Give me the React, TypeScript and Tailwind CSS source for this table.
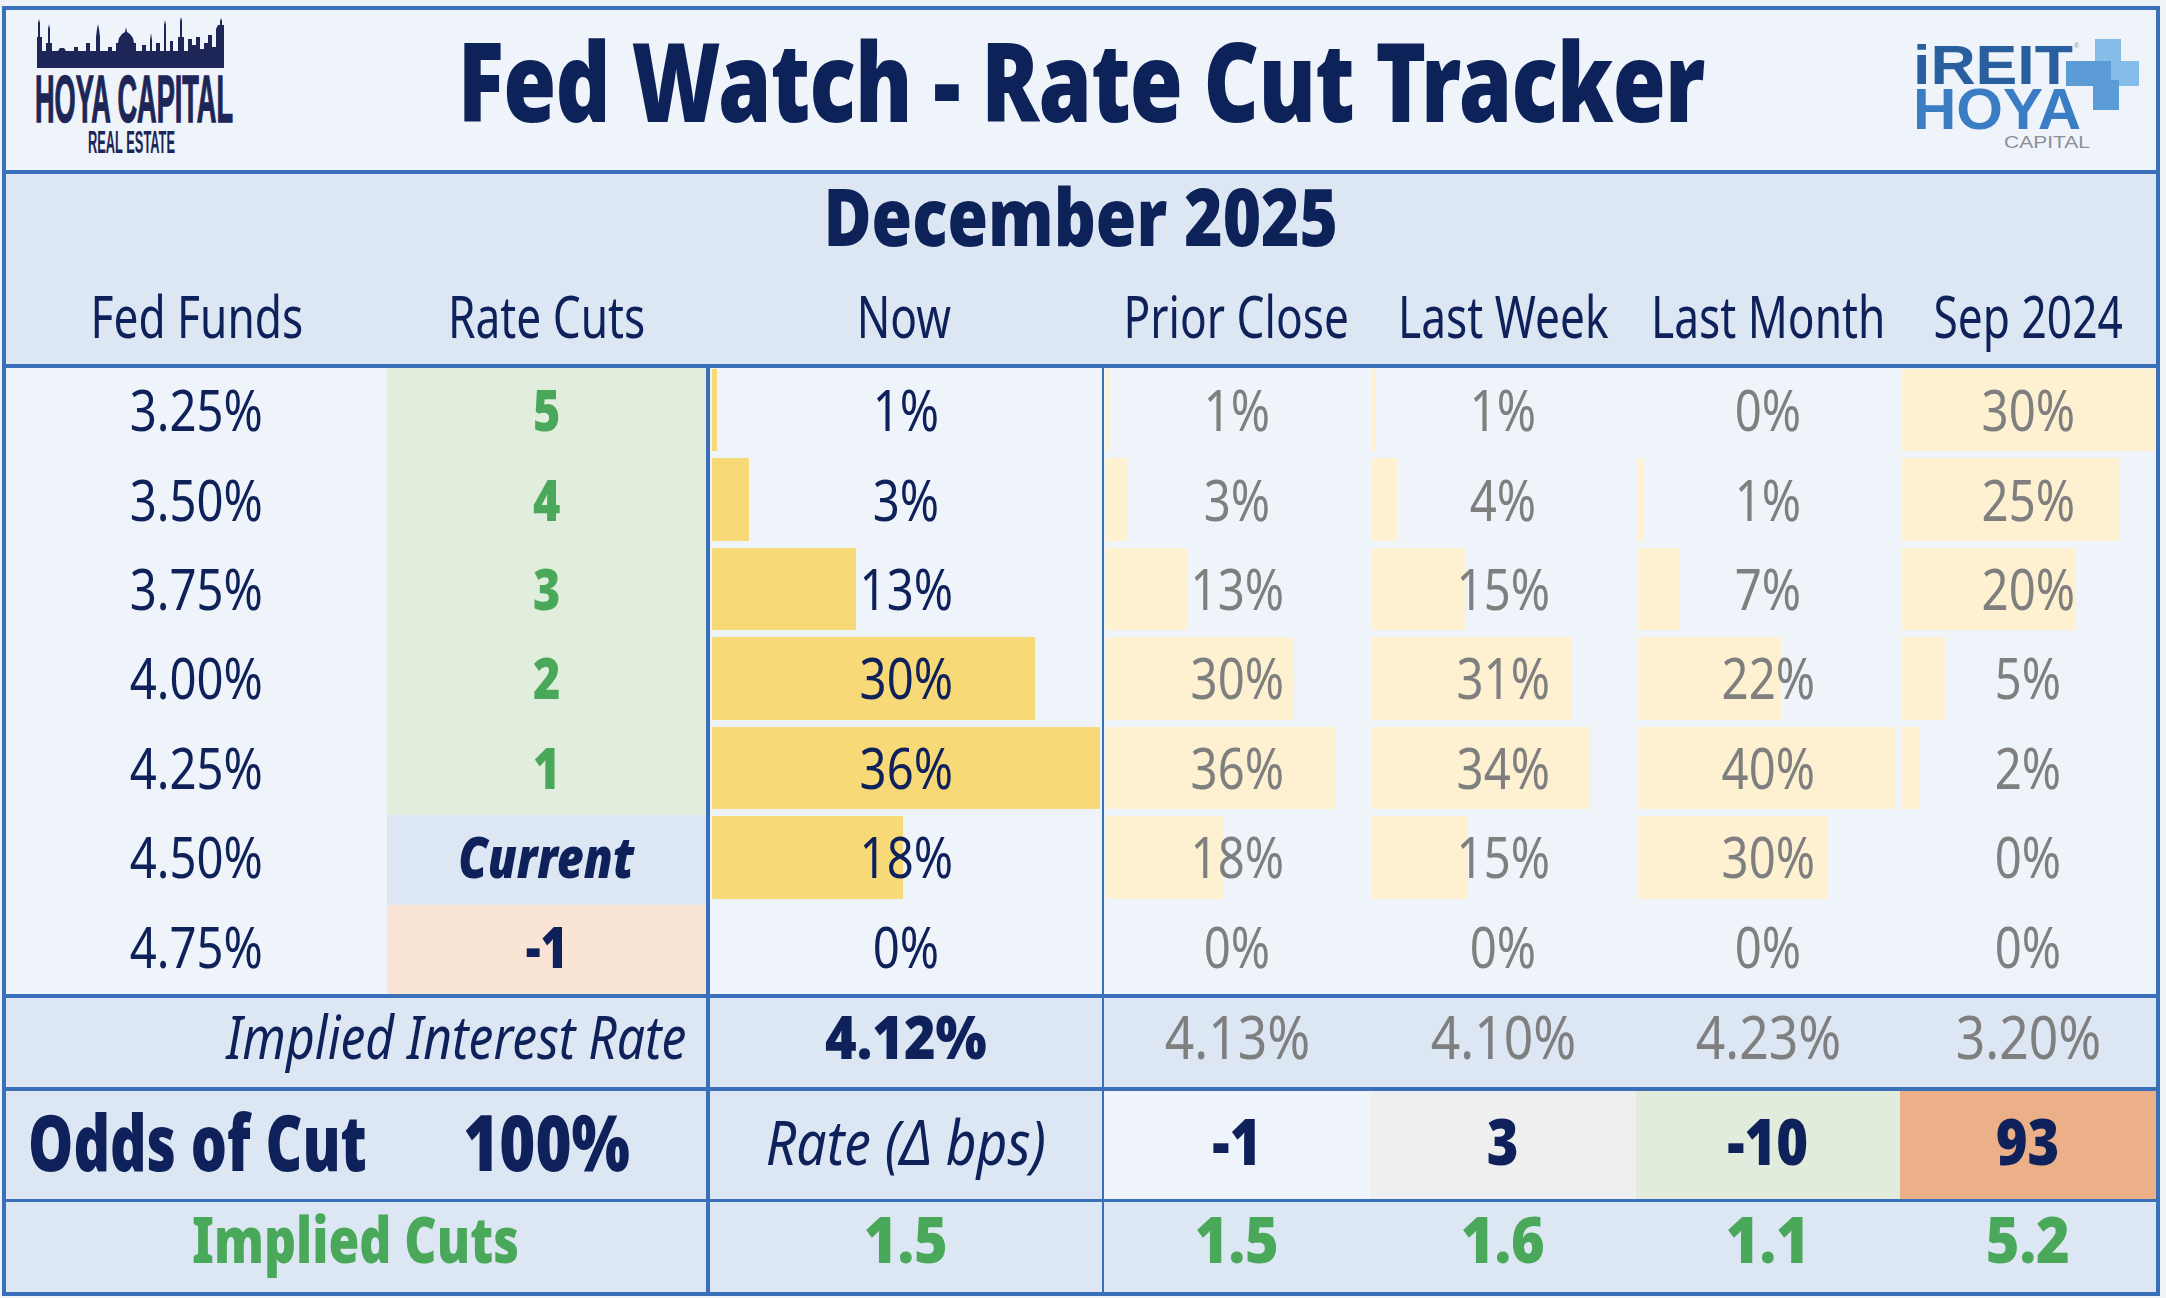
import React from "react";

type Row = {
  rate: string;
  cut: string;
  tone: "green" | "current" | "up";
  now: string;
  nowW: number;
  hist: [string, number][];
};

const rows: Row[] = [
  { rate: "3.25%", cut: "5", tone: "green", now: "1%", nowW: 5, hist: [["1%", 3], ["1%", 4], ["0%", 0], ["30%", 254]] },
  { rate: "3.50%", cut: "4", tone: "green", now: "3%", nowW: 37, hist: [["3%", 21], ["4%", 25], ["1%", 6], ["25%", 218]] },
  { rate: "3.75%", cut: "3", tone: "green", now: "13%", nowW: 144, hist: [["13%", 82], ["15%", 94], ["7%", 42], ["20%", 174]] },
  { rate: "4.00%", cut: "2", tone: "green", now: "30%", nowW: 323, hist: [["30%", 188], ["31%", 199], ["22%", 143], ["5%", 44]] },
  { rate: "4.25%", cut: "1", tone: "green", now: "36%", nowW: 388, hist: [["36%", 230], ["34%", 218], ["40%", 258], ["2%", 18]] },
  { rate: "4.50%", cut: "Current", tone: "current", now: "18%", nowW: 191, hist: [["18%", 117], ["15%", 96], ["30%", 190], ["0%", 0]] },
  { rate: "4.75%", cut: "-1", tone: "up", now: "0%", nowW: 0, hist: [["0%", 0], ["0%", 0], ["0%", 0], ["0%", 0]] },
];

const headers = ["Fed Funds", "Rate Cuts", "Now", "Prior Close", "Last Week", "Last Month", "Sep 2024"];
const history = [
  { rate: "4.13%", delta: "-1", deltaBg: "bg-[#eef4f9]", cuts: "1.5" },
  { rate: "4.10%", delta: "3", deltaBg: "bg-[#efefef]", cuts: "1.6" },
  { rate: "4.23%", delta: "-10", deltaBg: "bg-[#e1ecdd]", cuts: "1.1" },
  { rate: "3.20%", delta: "93", deltaBg: "bg-[#ebb088]", cuts: "5.2" },
];

// thin rule between "Now" and the history columns
const colBorder = (i: number) => (i === 0 ? "border-l-2 border-[#3a70ba]" : "");

// the reference uses a condensed face; squeeze Noto Sans horizontally
function Sq({ className = "", children }: { className?: string; children: React.ReactNode }) {
  return <span className={`inline-block whitespace-nowrap ${className}`}>{children}</span>;
}

function HoyaLogo() {
  return (
    <svg width="210" height="145" viewBox="0 0 210 145">
      <path
        fill="#1d2657"
        d="M7 53 L7 22 L8 22 L8 8 L9 4 L10 8 L10 22 L12 22 L12 36 L16 36 L16 28 L18 28 L18 14 L19 9 L20 14 L20 28 L22 28 L22 36 L28 36 L30 33 L34 33 L36 36 L44 36 L44 32 L48 32 L48 36 L56 36 L56 28 L60 28 L60 36 L66 36 L66 22 L67 14 L68 9 L69 14 L70 22 L70 36 L78 36 L78 32 L82 32 L82 36 L86 36 L86 28 L88 28 L89 23 L92 19 L95 17 L96 12 L97 17 L100 19 L103 23 L104 28 L106 28 L106 36 L112 36 L112 30 L116 30 L116 36 L120 36 L120 25 L121 18 L122 25 L122 36 L126 36 L126 28 L130 28 L130 36 L134 36 L134 10 L135 5 L136 10 L136 36 L140 36 L140 26 L143 26 L143 36 L148 36 L148 22 L150 22 L150 6 L151 2 L152 6 L152 22 L154 22 L154 36 L158 36 L158 24 L162 24 L162 30 L166 30 L166 22 L170 22 L170 34 L174 34 L174 28 L178 28 L178 20 L182 20 L182 32 L186 32 L186 14 L188 10 L190 10 L190 6 L191 3 L192 6 L192 10 L194 10 L194 53 Z"
      />
      <text
        x="5"
        y="107"
        fontSize="66"
        fontWeight="700"
        fontFamily="'Liberation Sans', sans-serif"
        fill="#1d2657"
        stroke="#1d2657"
        strokeWidth="1.4"
        textLength="198"
        lengthAdjust="spacingAndGlyphs"
      >
        HOYA CAPITAL
      </text>
      <text
        x="58"
        y="138"
        fontSize="31"
        fontWeight="700"
        fontFamily="'Liberation Sans', sans-serif"
        fill="#1d2657"
        textLength="87"
        lengthAdjust="spacingAndGlyphs"
      >
        REAL ESTATE
      </text>
    </svg>
  );
}

function IreitLogo() {
  return (
    <svg width="250" height="125" viewBox="0 0 250 125">
      <rect x="195" y="9" width="26" height="26" fill="#86bce8" />
      <rect x="208" y="31" width="31" height="25" fill="#86bce8" />
      <rect x="166" y="31" width="45" height="25" fill="#5b9bd6" />
      <rect x="193" y="50" width="26" height="30" fill="#5b9bd6" />
      <text
        x="13"
        y="54"
        fontSize="56"
        fontWeight="700"
        fontFamily="'Liberation Sans', sans-serif"
        fill="#2a5f9f"
        textLength="160"
        lengthAdjust="spacingAndGlyphs"
      >
        iREIT
      </text>
      <text x="174" y="18" fontSize="7" fill="#8b9099" fontFamily="'Liberation Sans', sans-serif">
        ®
      </text>
      <text
        x="13"
        y="99"
        fontSize="57"
        fontWeight="700"
        fontFamily="'Liberation Sans', sans-serif"
        fill="#3b7dc5"
        textLength="168"
        lengthAdjust="spacingAndGlyphs"
      >
        HOYA
      </text>
      <text
        x="104"
        y="118"
        fontSize="17"
        fontFamily="'Liberation Sans', sans-serif"
        fill="#8b9099"
        textLength="86"
        lengthAdjust="spacingAndGlyphs"
      >
        CAPITAL
      </text>
    </svg>
  );
}

export default function App() {
  const grid = "grid grid-cols-[381px_319px_396px_268px_266px_264px_256px]";

  return (
    <div className="min-h-screen w-[2166px] bg-[#eef3f8] pl-[2px] pt-[6px] font-['Noto_Sans',sans-serif] text-[#0f215a]">
      <div className="w-[2158px] border-4 border-[#3a70ba]">
        {/* Title band */}
        <div className="grid h-[160px] grid-cols-[300px_minmax(0,1fr)_300px] bg-[#eef4f9]">
          <div className="pl-[24px] pt-[5px]">
            <HoyaLogo />
          </div>
          <div className="flex items-center justify-center pb-[22px]">
            <h1 className="text-[110px] leading-none font-black tracking-[-1px] text-[#0d2259]">
              <Sq className="scale-x-[0.78]">Fed Watch - Rate Cut Tracker</Sq>
            </h1>
          </div>
          <div className="flex justify-end pr-[6px] pt-[20px]">
            <IreitLogo />
          </div>
        </div>

        {/* Month + column headers */}
        <div className="h-[198px] border-t-4 border-b-4 border-[#3a70ba] bg-[#dde7f4]">
          <div className="pt-[1px] text-center text-[80px] leading-none font-black text-[#0d2259]">
            <Sq className="scale-x-[0.82]">December 2025</Sq>
          </div>
          <div className={`${grid} mt-[31px]`}>
            {headers.map((h) => (
              <div key={h} className="flex justify-center text-[59px] leading-none">
                <Sq className="scale-x-[0.75]">{h}</Sq>
              </div>
            ))}
          </div>
        </div>

        {/* Probability rows */}
        <div className="grid h-[626px] grid-rows-7 bg-[#eef4f9]">
          {rows.map((r) => (
            <div key={r.rate} className={grid}>
              <div className="flex items-center justify-center pb-[6px] text-[57px] leading-none">
                <Sq className="scale-x-[0.83]">{r.rate}</Sq>
              </div>
              <div
                className={`flex items-center justify-center pb-[6px] text-[57px] leading-none font-black ${
                  r.tone === "green"
                    ? "bg-[#e2eedd] text-[#4aa85a]"
                    : r.tone === "current"
                      ? "bg-[#dde7f4] italic"
                      : "bg-[#fae4d6]"
                }`}
              >
                <Sq className="scale-x-[0.82]">{r.cut}</Sq>
              </div>
              <div className="relative flex items-center justify-center border-l-4 border-[#3a70ba] pb-[6px] text-[57px] leading-none">
                <div className="absolute top-[1px] bottom-[6px] left-[2px] bg-[#f8d978]" style={{ width: r.nowW }} />
                <Sq className="relative scale-x-[0.83]">{r.now}</Sq>
              </div>
              {r.hist.map(([v, w], i) => (
                <div
                  key={i}
                  className={`relative flex items-center justify-center pb-[6px] text-[57px] leading-none text-[#7f7f7f] ${colBorder(i)}`}
                >
                  <div className="absolute top-[1px] bottom-[6px] left-[2px] bg-[#fdf1d2]" style={{ width: w }} />
                  <Sq className="relative scale-x-[0.83]">{v}</Sq>
                </div>
              ))}
            </div>
          ))}
        </div>

        {/* Implied interest rate */}
        <div className={`${grid} h-[97px] border-t-4 border-b-4 border-[#3a70ba] bg-[#dde7f4]`}>
          <div className="col-span-2 flex items-center justify-end pr-[20px] pb-[14px] text-[60px] leading-none italic">
            <Sq className="origin-right scale-x-[0.83]">Implied Interest Rate</Sq>
          </div>
          <div className="flex items-center justify-center border-l-4 border-[#3a70ba] pb-[14px] text-[60px] leading-none font-black">
            <Sq className="scale-x-[0.9]">4.12%</Sq>
          </div>
          {history.map((h, i) => (
            <div
              key={h.rate}
              className={`flex items-center justify-center pb-[14px] text-[60px] leading-none text-[#7f7f7f] ${colBorder(i)}`}
            >
              <Sq className="scale-x-[0.86]">{h.rate}</Sq>
            </div>
          ))}
        </div>

        {/* Odds of cut */}
        <div className={`${grid} h-[111px] border-b-[3px] border-[#3a70ba] bg-[#dde7f4]`}>
          <div className="flex items-center pl-[22px] pb-[8px] text-[78px] leading-none font-black">
            <Sq className="origin-left scale-x-[0.73]">Odds of Cut</Sq>
          </div>
          <div className="flex items-center justify-center pb-[8px] text-[78px] leading-none font-black">
            <Sq className="scale-x-[0.79]">100%</Sq>
          </div>
          <div className="flex items-center justify-center border-l-4 border-[#3a70ba] pb-[8px] text-[62px] leading-none italic">
            <Sq className="scale-x-[0.86]">Rate (Δ bps)</Sq>
          </div>
          {history.map((h, i) => (
            <div
              key={h.delta}
              className={`flex items-center justify-center pb-[8px] text-[64px] leading-none font-black ${h.deltaBg} ${colBorder(i)}`}
            >
              <Sq className="scale-x-[0.85]">{h.delta}</Sq>
            </div>
          ))}
        </div>

        {/* Implied cuts */}
        <div className={`${grid} h-[90px] bg-[#dde7f4] text-[#4aa85a]`}>
          <div className="col-span-2 flex items-center justify-center pb-[16px] text-[64px] leading-none font-black">
            <Sq className="scale-x-[0.78]">Implied Cuts</Sq>
          </div>
          <div className="flex items-center justify-center border-l-4 border-[#3a70ba] pb-[16px] text-[64px] leading-none font-black">
            <Sq className="scale-x-[0.9]">1.5</Sq>
          </div>
          {history.map((h, i) => (
            <div
              key={h.cuts + i}
              className={`flex items-center justify-center pb-[16px] text-[64px] leading-none font-black ${colBorder(i)}`}
            >
              <Sq className="scale-x-[0.9]">{h.cuts}</Sq>
            </div>
          ))}
        </div>
      </div>
    </div>
  );
}
